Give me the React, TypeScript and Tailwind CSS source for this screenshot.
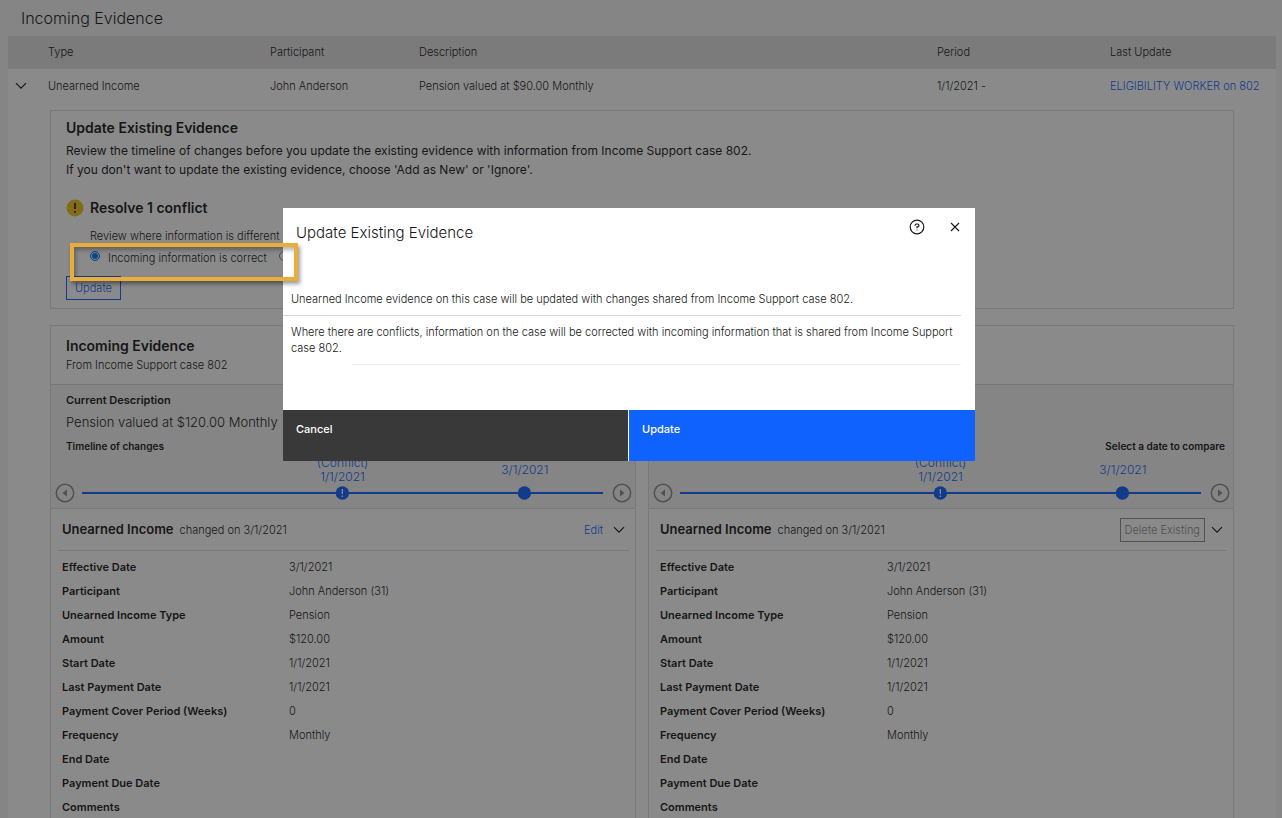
import React from "react";

type Point = { date: string; position: number; conflict?: boolean };

const timeline: Point[] = [
  { date: "1/1/2021", position: 50, conflict: true },
  { date: "3/1/2021", position: 85 },
];

const details: [string, string][] = [
  ["Effective Date", "3/1/2021"],
  ["Participant", "John Anderson (31)"],
  ["Unearned Income Type", "Pension"],
  ["Amount", "$120.00"],
  ["Start Date", "1/1/2021"],
  ["Last Payment Date", "1/1/2021"],
  ["Payment Cover Period (Weeks)", "0"],
  ["Frequency", "Monthly"],
  ["End Date", ""],
  ["Payment Due Date", ""],
  ["Comments", ""],
];

function ChevronDown() {
  return (
    <svg viewBox="0 0 12 8" className="h-2 w-3" fill="none" stroke="currentColor" strokeWidth="1.2" aria-hidden="true">
      <path d="M1 1.2 6 6.2 11 1.2" />
    </svg>
  );
}

function StepButton({ direction }: { direction: "Previous" | "Next" }) {
  return (
    <button type="button" aria-label={direction} className="shrink-0 text-[#8d8d8d]">
      <svg viewBox="0 0 20 20" className="size-5" aria-hidden="true">
        <circle cx="10" cy="10" r="8.7" fill="none" stroke="currentColor" strokeWidth="1.5" />
        <path d={direction === "Previous" ? "M12 6.5v7L7.5 10z" : "M8 6.5v7l4.5-3.5z"} fill="currentColor" />
      </svg>
    </button>
  );
}

function Timeline() {
  return (
    <div className="flex items-center pr-[3px] pl-1">
      <StepButton direction="Previous" />
      <div className="relative mr-[9px] ml-[7px] h-[2px] flex-1 bg-[#0f62fe]">
        {timeline.map((p) => (
          <button
            key={p.date}
            type="button"
            className="absolute bottom-[-6px] flex -translate-x-1/2 flex-col items-center text-xs leading-[14px] text-[#0f62fe]"
            style={{ left: `${p.position}%` }}
          >
            {p.conflict && <span>(Conflict)</span>}
            <span className={p.conflict ? "mb-[2px]" : "mb-[9px]"}>{p.date}</span>
            <svg viewBox="0 0 14 14" className="size-[14px]" aria-hidden="true">
              <circle cx="7" cy="7" r="6.7" fill="#0f62fe" />
              {p.conflict && <path d="M7 3v5M7 9.5v1.5" stroke="#fff" strokeWidth="1.3" />}
            </svg>
          </button>
        ))}
      </div>
      <StepButton direction="Next" />
    </div>
  );
}

function EvidenceCard({
  title,
  source,
  current,
  hint,
  hintClass,
  action,
}: {
  title?: string;
  source?: string;
  current?: string;
  hint: string;
  hintClass: string;
  action: React.ReactNode;
}) {
  return (
    <section className="border border-[#dcdcdc] bg-white">
      <header className="h-[59px] border-b border-[#d4d4d4] px-[15px] pt-[11px]">
        {title && <h3 className="text-sm leading-[18px] font-semibold">{title}</h3>}
        {source && <p className="text-[11px] leading-5">{source}</p>}
      </header>
      <div className="h-[124px] border-b border-[#dcdcdc] bg-[#f4f4f4]">
        <div className="flex h-[98px] flex-col px-2 pt-[5px]">
          <div className="h-12 px-[7px]">
            {current && (
              <>
                <h4 className="text-[11px] leading-5 font-semibold">Current Description</h4>
                <p className="text-[13px] leading-6 whitespace-nowrap">{current}</p>
              </>
            )}
          </div>
          <p className={hintClass}>{hint}</p>
        </div>
        <Timeline />
      </div>
      <div className="pr-1.5 pl-[7px]">
        <div className="flex h-[42px] items-center border-b border-[#dcdcdc] pt-px pr-1 pl-1">
          <h3 className="text-[13px] font-semibold">Unearned Income</h3>
          <span className="ml-1.5 flex-1 text-[11px]">changed on 3/1/2021</span>
          {action}
        </div>
        <table className="mt-1 w-full text-left text-[11px] leading-6">
          <tbody>
            {details.map(([label, value]) => (
              <tr key={label}>
                <th scope="row" className="w-[231px] pl-1 font-semibold">{label}</th>
                <td>{value}</td>
              </tr>
            ))}
          </tbody>
        </table>
      </div>
    </section>
  );
}

export default function App() {
  return (
    <div className="min-h-screen bg-[#f4f4f4] pr-1.5 pl-2 font-['Inter','Liberation_Sans',sans-serif] font-light text-[#161616]">
      <h1 className="pl-[13px] text-base leading-9">Incoming Evidence</h1>
      <table className="w-full table-fixed bg-white text-left text-[11px]">
        <colgroup>
          <col className="w-10" />
          <col className="w-[222px]" />
          <col className="w-[149px]" />
          <col />
          <col className="w-[173px]" />
          <col className="w-[166px]" />
        </colgroup>
        <thead className="bg-[#e0e0e0]">
          <tr className="h-[33px]">
            <td></td>
            <th scope="col" className="font-light">Type</th>
            <th scope="col" className="font-light">Participant</th>
            <th scope="col" className="font-light">Description</th>
            <th scope="col" className="font-light">Period</th>
            <th scope="col" className="font-light">Last Update</th>
          </tr>
        </thead>
        <tbody>
          <tr className="h-[34px]">
            <td className="pl-[7px]">
              <button type="button" aria-label="Collapse row" className="block"><ChevronDown /></button>
            </td>
            <td>Unearned Income</td>
            <td>John Anderson</td>
            <td>Pension valued at $90.00 Monthly</td>
            <td>1/1/2021 -</td>
            <td className="whitespace-nowrap"><a href="#worker" className="text-[#0f62fe]">ELIGIBILITY WORKER on 802</a></td>
          </tr>
          <tr>
            <td colSpan={6} className="px-[42px] pt-[7px]">
              <section className="h-[199px] border border-[#dcdcdc] px-[15px] pt-[7px]">
                <h2 className="text-sm leading-5 font-semibold">Update Existing Evidence</h2>
                <p className="pt-[3px] text-xs leading-[19px] font-normal">
                  Review the timeline of changes before you update the existing evidence with information from Income Support case 802.
                  <br />
                  If you don't want to update the existing evidence, choose 'Add as New' or 'Ignore'.
                </p>
                <div className="mt-[19px] flex items-center gap-1.5">
                  <svg viewBox="0 0 18 18" className="size-[18px]" aria-hidden="true">
                    <circle cx="9" cy="9" r="8.5" fill="#f1c21b" />
                    <path d="M9 4v6M9 12v1.8" stroke="#161616" strokeWidth="1.6" />
                  </svg>
                  <h3 className="text-sm leading-5 font-semibold">Resolve 1 conflict</h3>
                </div>
                <p className="mt-2 pl-6 leading-5">Review where information is different</p>
                <div className="relative flex h-6 items-center pl-6">
                  <input
                    id="incoming"
                    type="radio"
                    name="resolution"
                    defaultChecked
                    className="mb-1 size-[10px] appearance-none rounded-full border border-[#0075ff] bg-[#0075ff] shadow-[inset_0_0_0_1px_#fff]"
                  />
                  <label htmlFor="incoming" className="ml-2 w-[171px]">Incoming information is correct</label>
                  <input
                    type="radio"
                    name="resolution"
                    aria-label="Existing information is correct"
                    className="mb-1 size-[10px] appearance-none rounded-full border border-[#767676]"
                  />
                  <span className="pointer-events-none absolute -top-[3px] left-1 z-50 h-[38px] w-[228px] border-4 border-[#e8ad3a] shadow-[2px_3px_4px_rgba(0,0,0,0.4),inset_2px_3px_4px_rgba(0,0,0,0.3)]" />
                </div>
                <button type="button" className="mt-1.5 h-6 border border-[#0f62fe] px-2 text-[#0f62fe]">Update</button>
              </section>
              <div className="mt-4 grid grid-cols-2 gap-3">
                <EvidenceCard
                  title="Incoming Evidence"
                  source="From Income Support case 802"
                  current="Pension valued at $120.00 Monthly"
                  hint="Timeline of changes"
                  hintClass="px-[7px] text-[10px] leading-[16px] font-semibold"
                  action={
                    <>
                      <a href="#edit" className="mr-2.5 text-[11px] text-[#0f62fe]">Edit</a>
                      <button type="button" aria-label="Toggle details"><ChevronDown /></button>
                    </>
                  }
                />
                <EvidenceCard
                  hint="Select a date to compare"
                  hintClass="text-right text-[10px] leading-[16px] font-semibold"
                  action={
                    <>
                      <button type="button" disabled className="mr-1.5 h-6 border border-[#8d8d8d] px-1 text-[11px] text-[#8d8d8d]">Delete Existing</button>
                      <button type="button" aria-label="Toggle details"><ChevronDown /></button>
                    </>
                  }
                />
              </div>
            </td>
          </tr>
        </tbody>
      </table>

      <div className="fixed inset-0 z-40 flex items-start justify-center bg-[#161616]/50 pt-52 pr-6">
        <div role="dialog" aria-modal="true" aria-labelledby="dialog-title" className="w-[692px] max-w-full bg-white text-[11px]">
          <header className="flex h-20 items-start pt-[11px] pr-[15px] pl-[13px]">
            <h2 id="dialog-title" className="flex-1 text-[15px] leading-7">Update Existing Evidence</h2>
            <button type="button" aria-label="Help" className="mr-[25px]">
              <svg viewBox="0 0 16 16" className="size-4" fill="none" stroke="currentColor" strokeWidth="1.2" aria-hidden="true">
                <circle cx="8" cy="8" r="6.8" />
                <path d="M6.1 6.7V6.3A1.4 1.4 0 0 1 7.500 5h1a1.400 1.400 0 0 1 0 2.900H8v1.400" />
                <circle cx="8" cy="11" r=".6" fill="currentColor" stroke="none" />
              </svg>
            </button>
            <button type="button" aria-label="Close" className="mt-[3px]">
              <svg viewBox="0 0 10 10" className="size-[10px]" fill="none" stroke="currentColor" strokeWidth="1.1" aria-hidden="true">
                <path d="m1 1 8 8M9 1 1 9" />
              </svg>
            </button>
          </header>
          <div className="h-[122px] pr-3.5">
            <p className="border-b border-[#d8d8d8] pt-[3px] pb-2 pl-2 leading-4">
              Unearned Income evidence on this case will be updated with changes shared from Income Support case 802.
            </p>
            <p className="pt-2 pb-2 pl-2 leading-4">
              Where there are conflicts, information on the case will be corrected with incoming information that is shared from Income Support case 802.
            </p>
            <hr className="ml-[69px] border-[#f0f0f0]" />
          </div>
          <footer className="grid grid-cols-2">
            <button type="button" className="flex h-[51px] items-start border-r border-white bg-[#393939] px-[13px] pt-2.5 leading-[18px] font-medium text-white">Cancel</button>
            <button type="button" className="flex h-[51px] items-start bg-[#0f62fe] px-[13px] pt-2.5 leading-[18px] font-medium text-white">Update</button>
          </footer>
        </div>
      </div>
    </div>
  );
}
